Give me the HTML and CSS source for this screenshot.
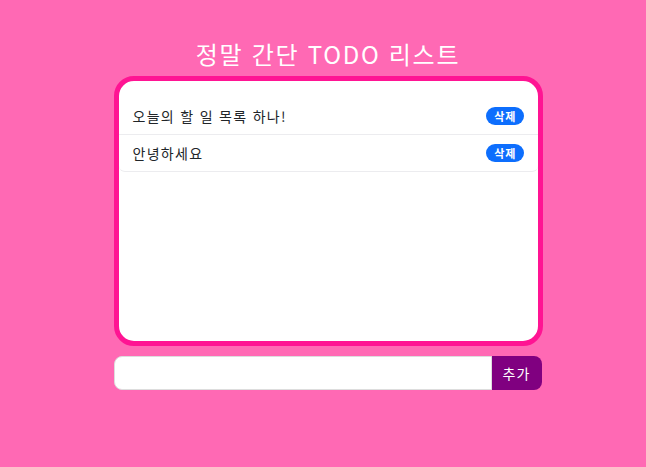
FILE: index.html
```html
<!DOCTYPE html>
<html lang="ko">
<head>
  <meta charset="UTF-8" />
  <meta name="viewport" content="width=device-width, initial-scale=1.0" />
  <title>정말 간단 TODO 리스트</title>
  <link rel="stylesheet" href="styles.css">
</head>
<body>
  <div class="app">
    <h1 class="title">정말 간단 TODO 리스트</h1>

    <div class="todo-box">
      <ul class="todo-list">
        <li class="todo-item">
          <span>오늘의 할 일 목록 하나!</span>
          <span class="badge">삭제</span>
        </li>
        <li class="todo-item">
          <span>안녕하세요</span>
          <span class="badge">삭제</span>
        </li>
      </ul>
    </div>

    <form class="todo-form">
      <input type="text" class="todo-input">
      <button type="submit" class="todo-add">추가</button>
    </form>
  </div>
</body>
</html>
```

FILE: styles.css
```css
body {
  margin: 0;
  padding: 0 0 0 10px;
  background: #ff69b4;
  font-family: "Noto Sans CJK KR", "Noto Sans", sans-serif;
  color: #212529;
}

.app {
  width: 429px;
  margin: 0 auto;
  padding-top: 36px;
}

.title {
  margin: 0 0 5px;
  text-align: center;
  color: #fff;
  font-size: 24px;
  font-weight: normal;
  line-height: 35px;
  letter-spacing: 1.7px;
}

.todo-box {
  box-sizing: border-box;
  height: 270px;
  background: #fff;
  border: 5px solid #ff1493;
  border-radius: 20px;
  padding-top: 17px;
}

.todo-list {
  list-style: none;
  margin: 0;
  padding: 0;
}

.todo-item {
  display: flex;
  justify-content: space-between;
  align-items: center;
  padding: 8px 14px;
  font-size: 14px;
  line-height: 20px;
  letter-spacing: 1.3px;
  border-bottom: 1px solid #ececef;
}

.todo-item:last-child {
  border-radius: 0 0 6px 6px;
}

.badge {
  background: #0d6efd;
  color: #fff;
  font-size: 11px;
  font-weight: bold;
  line-height: 12px;
  letter-spacing: 1px;
  padding: 3px 7px 3px 8px;
  border-radius: 10px;
}

.todo-form {
  display: flex;
  margin-top: 10px;
  padding-right: 1px;
}

.todo-input {
  flex: 1;
  height: 34px;
  box-sizing: border-box;
  border: 1px solid #ddd;
  border-radius: 8px 0 0 8px;
  outline: none;
  padding: 0 10px;
  font-size: 14px;
}

.todo-add {
  width: 50px;
  height: 34px;
  border: none;
  border-radius: 0 8px 8px 0;
  background: #800080;
  color: #fff;
  font-family: "Noto Sans CJK KR", sans-serif;
  font-size: 14px;
  letter-spacing: 1px;
  cursor: pointer;
}
```
